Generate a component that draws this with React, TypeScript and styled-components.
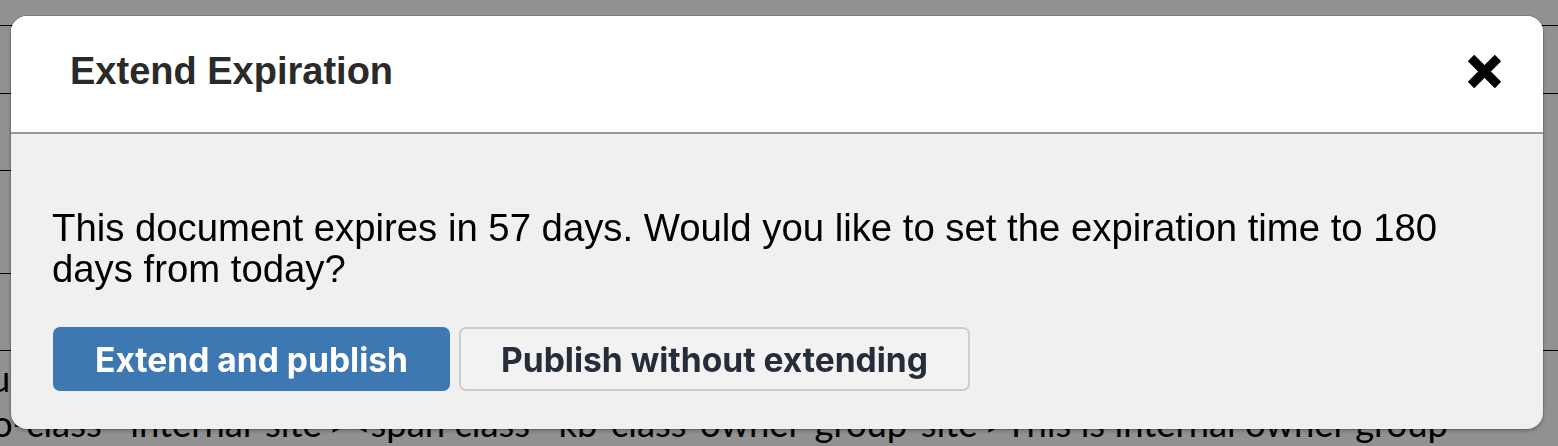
import React from "react";
import styled, { createGlobalStyle } from "styled-components";

const GlobalStyle = createGlobalStyle`
    html, body {
        margin: 0;
        padding: 0;
        width: 1558px;
        height: 446px;
        overflow: hidden;
        background: #fff;
    }
`

const Page = styled.div`
    width: 1558px;
    height: 446px;
    overflow: hidden;
    font-family: Lato, "Liberation Sans", sans-serif;
    color: #000;
`

const Row = styled.div<{ h: number; full?: boolean }>`
    height: ${p => p.h}px;
    box-sizing: border-box;
    border-bottom: ${p => (p.full ? "1px solid #000" : "none")};
    display: flex;
`

const Cell = styled.div`
    width: 600px;
    height: 100%;
    box-sizing: border-box;
    border-bottom: 1px solid #000;
`

const BgBlock = styled.div`
    padding-top: 5px;
`

const BgText = styled.div<{ shift: number }>`
    font-size: 36.4px;
    line-height: 45px;
    white-space: nowrap;
    margin-left: ${p => p.shift}px;
`

const Overlay = styled.div`
    position: fixed;
    inset: 0;
    background: rgba(0, 0, 0, 0.43);
    padding: 16px 15px 0 11px;
`

const Dialog = styled.div`
    width: 1532px;
    height: 413px;
    border-radius: 16px;
    overflow: hidden;
    background: #f0f0f0;
    box-shadow: 0 0 0 1px rgba(0, 0, 0, 0.12), 0 2px 4px rgba(0, 0, 0, 0.25);
    display: flex;
    flex-direction: column;
`

const Header = styled.div`
    height: 118px;
    flex-shrink: 0;
    box-sizing: border-box;
    background: #fff;
    border-bottom: 2px solid #9a9a9a;
    display: flex;
    align-items: center;
    justify-content: space-between;
    padding: 0 41px 6px 59px;
`

const Title = styled.h4`
    margin: 0;
    font-family: "Liberation Sans", Arial, sans-serif;
    font-weight: 700;
    font-size: 38px;
    color: #2a2a2a;
`

const CloseButton = styled.button`
    border: 0;
    background: none;
    padding: 0;
    width: 35px;
    height: 35px;
    cursor: pointer;
    svg { display: block; }
`

const Body = styled.div`
    padding: 73px 41px 0 41px;
`

const Message = styled.p`
    margin: 0;
    font-family: "Liberation Sans", Arial, sans-serif;
    font-size: 38.3px;
    line-height: 41px;
    color: #000;
`

const Actions = styled.div`
    display: flex;
    gap: 9px;
    margin-top: 38px;
    padding-left: 1px;
`

const Button = styled.button<{ primary?: boolean }>`
    height: 64px;
    box-sizing: border-box;
    padding: 0 40px;
    border-radius: 7px;
    font-family: Inter, "Liberation Sans", sans-serif;
    font-weight: 700;
    font-size: 33.6px;
    background: ${p => (p.primary ? "#3d78b3" : "#f2f2f2")};
    color: ${p => (p.primary ? "#fff" : "#262d3a")};
    border: 2px solid ${p => (p.primary ? "#3d78b3" : "#cdcdcd")};
`

const CloseIcon = () => (
    <svg width="35" height="35" viewBox="0 0 35 35">
        <path d="M4 4L31 31M31 4L4 31" stroke="#000" strokeWidth="9" />
    </svg>
)

export default function App() {
    return <>
        <GlobalStyle/>
        <Page>
            <Row h={26} full/>
            <Row h={68} full/>
            <Row h={77}><Cell/></Row>
            <Row h={103}><Cell/></Row>
            <Row h={77} full/>
            <BgBlock>
                <BgText shift={-10}>u</BgText>
                <BgText shift={-8}>o-class='internal-site'&gt;&lt;span class='kb-class-owner-group-site'&gt;This is internal owner group</BgText>
            </BgBlock>
        </Page>
        <Overlay>
            <Dialog role="dialog">
                <Header>
                    <Title>Extend Expiration</Title>
                    <CloseButton aria-label="Close"><CloseIcon/></CloseButton>
                </Header>
                <Body>
                    <Message>This document expires in 57 days. Would you like to set the expiration time to 180 days from today?</Message>
                    <Actions>
                        <Button primary>Extend and publish</Button>
                        <Button>Publish without extending</Button>
                    </Actions>
                </Body>
            </Dialog>
        </Overlay>
    </>
}
